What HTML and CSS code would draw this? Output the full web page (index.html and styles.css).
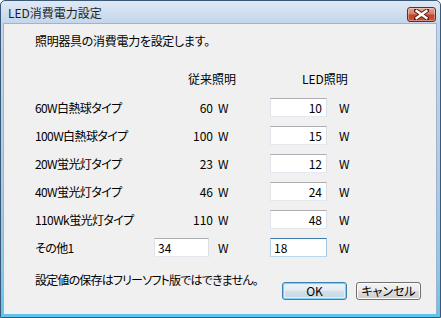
FILE: index.html
```html
<!DOCTYPE html>
<html lang="ja">
<head>
  <meta charset="UTF-8" />
  <title>LED消費電力設定</title>
  <link rel="stylesheet" href="styles.css">
</head>
<body>
  <div class="window">
    <div class="titlebar">
      <span class="title">LED消費電力設定</span>
      <div class="close-btn">
        <svg width="15" height="11" viewBox="0 0 15 11">
          <path d="M2 1.5 L13 9.5 M13 1.5 L2 9.5" stroke="#5a1a10" stroke-width="4.2" stroke-linecap="square"/>
          <path d="M2.6 2 L12.4 9 M12.4 2 L2.6 9" stroke="#ffffff" stroke-width="2.4" stroke-linecap="square"/>
        </svg>
      </div>
    </div>

    <div class="client">
      <p class="intro">照明器具の消費電力を設定します。</p>

      <div class="table">
        <div class="head head-old">従来照明</div>
        <div class="head head-led">LED照明</div>

        <div class="label">60W白熱球タイプ</div>
        <div class="value">60</div>
        <div class="unit">W</div>
        <input class="field" type="text" value="10">
        <div class="unit unit-led">W</div>

        <div class="label">100W白熱球タイプ</div>
        <div class="value">100</div>
        <div class="unit">W</div>
        <input class="field" type="text" value="15">
        <div class="unit unit-led">W</div>

        <div class="label">20W蛍光灯タイプ</div>
        <div class="value">23</div>
        <div class="unit">W</div>
        <input class="field" type="text" value="12">
        <div class="unit unit-led">W</div>

        <div class="label">40W蛍光灯タイプ</div>
        <div class="value">46</div>
        <div class="unit">W</div>
        <input class="field" type="text" value="24">
        <div class="unit unit-led">W</div>

        <div class="label">110Wk蛍光灯タイプ</div>
        <div class="value">110</div>
        <div class="unit">W</div>
        <input class="field" type="text" value="48">
        <div class="unit unit-led">W</div>

        <div class="label">その他1</div>
        <div class="value"><input class="field field-left field-old" type="text" value="34"></div>
        <div class="unit">W</div>
        <input class="field field-left focused" type="text" value="18">
        <div class="unit unit-led">W</div>
      </div>

      <div class="footer">
        <span class="note">設定値の保存はフリーソフト版ではできません。</span>
        <div class="buttons">
          <button class="btn btn-default">OK</button>
          <button class="btn">キャンセル</button>
        </div>
      </div>
    </div>
  </div>
</body>
</html>
```

FILE: styles.css
```css
body {
  margin: 0;
  font-family: "Noto Sans CJK JP", "Liberation Sans", sans-serif;
  font-size: 12px;
  color: #000;
  background: #fff;
}

.window {
  width: 441px;
  height: 318px;
  box-sizing: border-box;
  border: 1px solid #3a5878;
  border-radius: 5px 5px 0 0;
  padding: 0 3px 3px 2px;
  background: linear-gradient(#dfe9f5 0, #c3d6ec 22px, #b2cce8 50%, #8cc8ea 85%, #5cc4ec 100%);
  display: flex;
  flex-direction: column;
}

.titlebar {
  height: 22px;
  display: flex;
  align-items: center;
  justify-content: space-between;
  padding: 0 1px 0 5px;
}

.title {
  font-size: 12px;
  line-height: 14px;
  color: #1e1e1e;
  margin-top: 2px;
  font-feature-settings: "palt";
}

.close-btn {
  width: 27px;
  height: 13px;
  margin-top: 4px;
  border: 1px solid #6e2a1f;
  border-radius: 3px;
  background: linear-gradient(#e6a696 0, #d47b66 45%, #c0432b 55%, #c8563c 100%);
  box-shadow: inset 0 0 0 1px rgba(255, 255, 255, 0.35);
  display: flex;
  align-items: center;
  justify-content: center;
}

.client {
  flex: 1;
  background: #f0f0f0;
  border: 1px solid #9fb4cc;
  border-bottom: 0;
  padding: 10px 15px 0 31px;
  display: flex;
  flex-direction: column;
}

.intro {
  margin: 0;
  line-height: 14px;
  letter-spacing: -0.3px;
  font-feature-settings: "palt";
}

.table {
  margin-top: 20px;
  display: grid;
  grid-template-columns: 120px 58px 57px 57px auto;
  grid-template-rows: 21px repeat(6, 19px);
  row-gap: 9px;
  align-items: center;
  line-height: 14px;
}

.head {
  font-feature-settings: "palt";
}

.head-old {
  grid-column: 2 / 4;
  padding-left: 33px;
}

.head-led {
  grid-column: 4 / 6;
  padding-left: 32px;
}

.label {
  font-feature-settings: "palt";
  letter-spacing: -0.6px;
}

.value {
  text-align: right;
  display: flex;
  justify-content: flex-end;
}

.unit {
  padding-left: 5px;
}

.unit-led {
  padding-left: 12px;
}

.field {
  box-sizing: border-box;
  width: 57px;
  height: 19px;
  margin: 0;
  padding: 0 4px 0 3px;
  font-family: inherit;
  font-size: 12px;
  text-align: right;
  background: #fff;
  border: 1px solid;
  border-color: #abadb3 #dbdfe6 #e3e9ef #e2e3ea;
  outline: none;
}

.field-left {
  text-align: left;
  padding-left: 3px;
}

.field-old {
  width: 55px;
  margin-right: 4px;
}

.focused {
  border-color: #3d7bad #a4c9e3 #b7d9ed #b5cfe7;
}

.footer {
  margin-top: 16px;
  display: flex;
  justify-content: space-between;
  align-items: flex-start;
}

.note {
  line-height: 14px;
  letter-spacing: -0.8px;
  font-feature-settings: "palt";
}

.buttons {
  display: flex;
  gap: 9px;
  margin-top: 9px;
}

.btn {
  box-sizing: border-box;
  width: 65px;
  height: 18px;
  padding: 0;
  font-family: inherit;
  font-size: 12px;
  line-height: 14px;
  color: #000;
  border: 1px solid #707070;
  border-radius: 3px;
  background: linear-gradient(#f2f2f2 0, #ebebeb 50%, #dddddd 50%, #cfcfcf 100%);
  box-shadow: inset 0 0 0 1px #fcfcfc;
  font-feature-settings: "palt";
}

.btn-default {
  border-color: #3c7fb1;
  box-shadow: inset 0 0 0 1px #7ed3f4, inset 0 0 0 2px #dcf1fb;
  background: linear-gradient(#eef3f7 0, #e3eaf0 50%, #d4dfe8 50%, #c8d6e2 100%);
}
```
